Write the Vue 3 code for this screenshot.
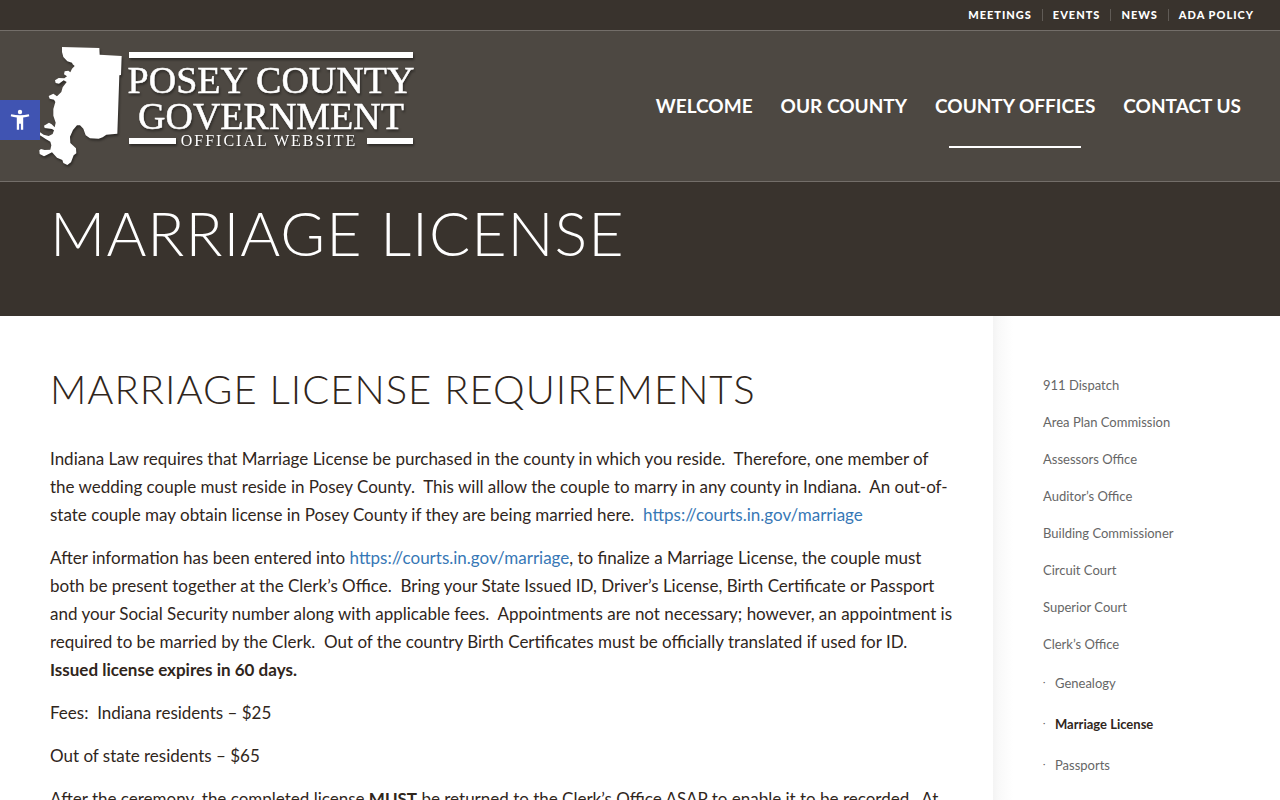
<script setup>
const topLinks = ['Meetings', 'Events', 'News', 'ADA Policy']
const mainLinks = [
  { label: 'Welcome' },
  { label: 'Our County' },
  { label: 'County Offices', current: true },
  { label: 'Contact Us' }
]
const offices = [
  '911 Dispatch',
  'Area Plan Commission',
  'Assessors Office',
  'Auditor’s Office',
  'Building Commissioner',
  'Circuit Court',
  'Superior Court'
]
const clerkPages = [
  { label: 'Genealogy' },
  { label: 'Marriage License', current: true },
  { label: 'Passports' }
]
</script>

<template>
  <div class="page">
    <button class="access" type="button" aria-label="Open accessibility toolbar">
      <svg viewBox="0 0 40 40" aria-hidden="true">
        <circle cx="20" cy="12" r="2.200" />
        <path d="M11.200 14.200Q20 16.400 28.800 14.200L29.300 16.200Q26.500 17 23.200 17.400V29.700H20.900V23.800H19.100V29.700H16.800V17.400Q13.500 17 10.700 16.200Z" />
      </svg>
    </button>

    <nav class="topbar" aria-label="Secondary">
      <ul>
        <li v-for="item in topLinks" :key="item"><a href="#">{{ item }}</a></li>
      </ul>
    </nav>

    <header class="header">
      <a class="logo" href="#" aria-label="Posey County Government Official Website">
        <svg viewBox="36 43 380 126">
          <g class="shadowed">
            <path transform="translate(0 30) scale(.33333)" d="M186 51L298 54L299 74L365 78L363 135L358 136L352 311L319 314L308 322L296 326L270 325L257 316L250 296L240 286L231 286L219 300L210 320L211 339L228 355L229 370L221 376L213 397L202 405L190 399L187 390L171 383L156 367L140 375L132 379L119 372L118 361L123 357L134 360L151 359L154 346L151 335L137 327L120 316L119 306L131 314L146 318L158 312L162 301L156 297L134 294L132 287L147 278L155 283L164 292L167 278L160 257L160 237L166 216L162 209L149 206L146 198L160 191L171 199L184 186L188 172L200 156L191 151L177 161L167 159L165 151L176 144L193 145L201 139L192 133L194 124L205 122L211 127L216 116L224 108L218 103L216 98L202 94L190 81L186 66Z" />
            <path d="M129 52h284v6H129zM129 138h47v6h-47zM367 138h46v6h-46z" />
            <text class="logo-name" x="271" y="93">POSEY COUNTY</text>
            <text class="logo-name" x="271" y="129">GOVERNMENT</text>
            <text class="logo-tag" x="269" y="146">OFFICIAL WEBSITE</text>
          </g>
        </svg>
      </a>
      <nav class="mainnav" aria-label="Main">
        <a v-for="item in mainLinks" :key="item.label" href="#" :class="{ current: item.current }">{{ item.label }}</a>
      </nav>
    </header>

    <section class="hero">
      <h1>Marriage License</h1>
    </section>

    <div class="columns">
      <main class="content">
        <h2>Marriage License Requirements</h2>
        <p>Indiana Law requires that Marriage License be purchased in the county in which you reside.&nbsp; Therefore, one member of the wedding couple must reside in Posey County.&nbsp; This will allow the couple to marry in any county in Indiana.&nbsp; An out-of-state couple may obtain license in Posey County if they are being married here.&nbsp; <a href="#">https://courts.in.gov/marriage</a></p>
        <p>After information has been entered into <a href="#">https://courts.in.gov/marriage</a>, to finalize a Marriage License, the couple must both be present together at the Clerk’s Office.&nbsp; Bring your State Issued ID, Driver’s License, Birth Certificate or Passport and your Social Security number along with applicable fees.&nbsp; Appointments are not necessary; however, an appointment is required to be married by the Clerk.&nbsp; Out of the country Birth Certificates must be officially translated if used for ID.&nbsp; <strong>Issued license expires in 60 days.</strong></p>
        <p>Fees:&nbsp; Indiana residents – $25</p>
        <p>Out of state residents – $65</p>
        <p>After the ceremony, the completed license <strong>MUST</strong> be returned to the Clerk’s Office ASAP to enable it to be recorded.&nbsp; At</p>
      </main>

      <aside class="sidebar">
        <nav aria-label="County offices">
          <ul class="offices">
            <li v-for="item in offices" :key="item"><a href="#">{{ item }}</a></li>
            <li>
              <a href="#">Clerk’s Office</a>
              <ul class="sub">
                <li v-for="item in clerkPages" :key="item.label">
                  <a href="#" :class="{ current: item.current }">{{ item.label }}</a>
                </li>
              </ul>
            </li>
          </ul>
        </nav>
      </aside>
    </div>
  </div>
</template>

<style>
html {
  background: #fff;
}
body {
  overflow: hidden;
}
</style>

<style scoped>
.page {
  position: relative;
  height: 100vh;
  overflow: hidden;
  font-family: Lato, "Liberation Sans", sans-serif;
  color: #30261c;
}
a {
  text-decoration: none;
}
ul {
  list-style: none;
  margin: 0;
  padding: 0;
}
.access {
  position: absolute;
  left: 0;
  top: 100px;
  z-index: 2;
  width: 40px;
  height: 40px;
  padding: 0;
  border: 0;
  background: #4054b2;
}
.access svg {
  display: block;
  width: 40px;
  height: 40px;
  fill: #fff;
}
.topbar {
  background: #39332d;
  border-bottom: 1px solid #736e69;
  padding: 0 26px;
}
.topbar ul {
  display: flex;
  justify-content: flex-end;
  align-items: center;
  height: 30px;
}
.topbar li {
  line-height: 8px;
  padding: 0 10px 2px 0;
  margin-right: 10px;
  border-right: 1px solid #605b56;
}
.topbar li:last-child {
  padding-right: 0;
  margin-right: 0;
  border-right: 0;
}
.topbar a {
  color: #fff;
  font-size: 11px;
  font-weight: 900;
  letter-spacing: 1px;
  text-transform: uppercase;
}
.header {
  display: flex;
  justify-content: space-between;
  align-items: center;
  background: #4d4842;
  border-bottom: 1px solid #736e69;
  padding: 0 25px 0 36px;
}
.logo svg {
  display: block;
  width: 380px;
  height: 126px;
  fill: #fff;
}
.shadowed {
  filter: drop-shadow(1px 2px 1px rgba(0, 0, 0, 0.4));
}
.logo-name,
.logo-tag {
  font-family: "Liberation Serif", serif;
  text-anchor: middle;
}
.logo-name {
  font-size: 38px;
  stroke: #fff;
  stroke-width: 0.5;
}
.logo-tag {
  font-size: 16px;
  letter-spacing: 2px;
}
.mainnav {
  display: flex;
}
.mainnav a {
  position: relative;
  padding: 0 14px;
  line-height: 150px;
  color: #fff;
  font-size: 19px;
  font-weight: 700;
  text-transform: uppercase;
}
.mainnav .current::after {
  content: "";
  position: absolute;
  left: 15%;
  right: 15%;
  bottom: 33px;
  height: 2px;
  background: #fff;
}
.hero {
  background: #39332d;
  padding: 18px 50px 50px;
}
.hero h1 {
  margin: 0;
  color: #fff;
  font-size: 61px;
  line-height: 66px;
  font-weight: 300;
  letter-spacing: 1px;
  text-transform: uppercase;
}
.columns {
  display: grid;
  grid-template-columns: minmax(0, 1fr) 287px;
}
.content {
  padding: 50px 39px 50px 50px;
}
.content h2 {
  margin: 0 0 33px;
  font-size: 40px;
  line-height: 46px;
  font-weight: 300;
  letter-spacing: 1px;
  text-transform: uppercase;
}
.content p {
  margin: 0 0 15px;
  font-size: 17px;
  line-height: 28px;
}
.content p a {
  color: #3778b6;
}
.sidebar {
  padding: 51px 50px;
  background: linear-gradient(to right, #f4f4f4, #f9f9f9 6px, #fff 20px);
}
.offices a {
  display: block;
  padding: 8px 0;
  font-size: 13px;
  line-height: 21px;
  color: #666;
}
.sub li {
  display: flex;
  padding: 2px 0;
}
.sub li::before {
  content: "·";
  width: 12px;
  font-size: 9px;
  line-height: 33px;
  color: #666;
}
.offices .current {
  color: #30261c;
  font-weight: 700;
}
</style>
